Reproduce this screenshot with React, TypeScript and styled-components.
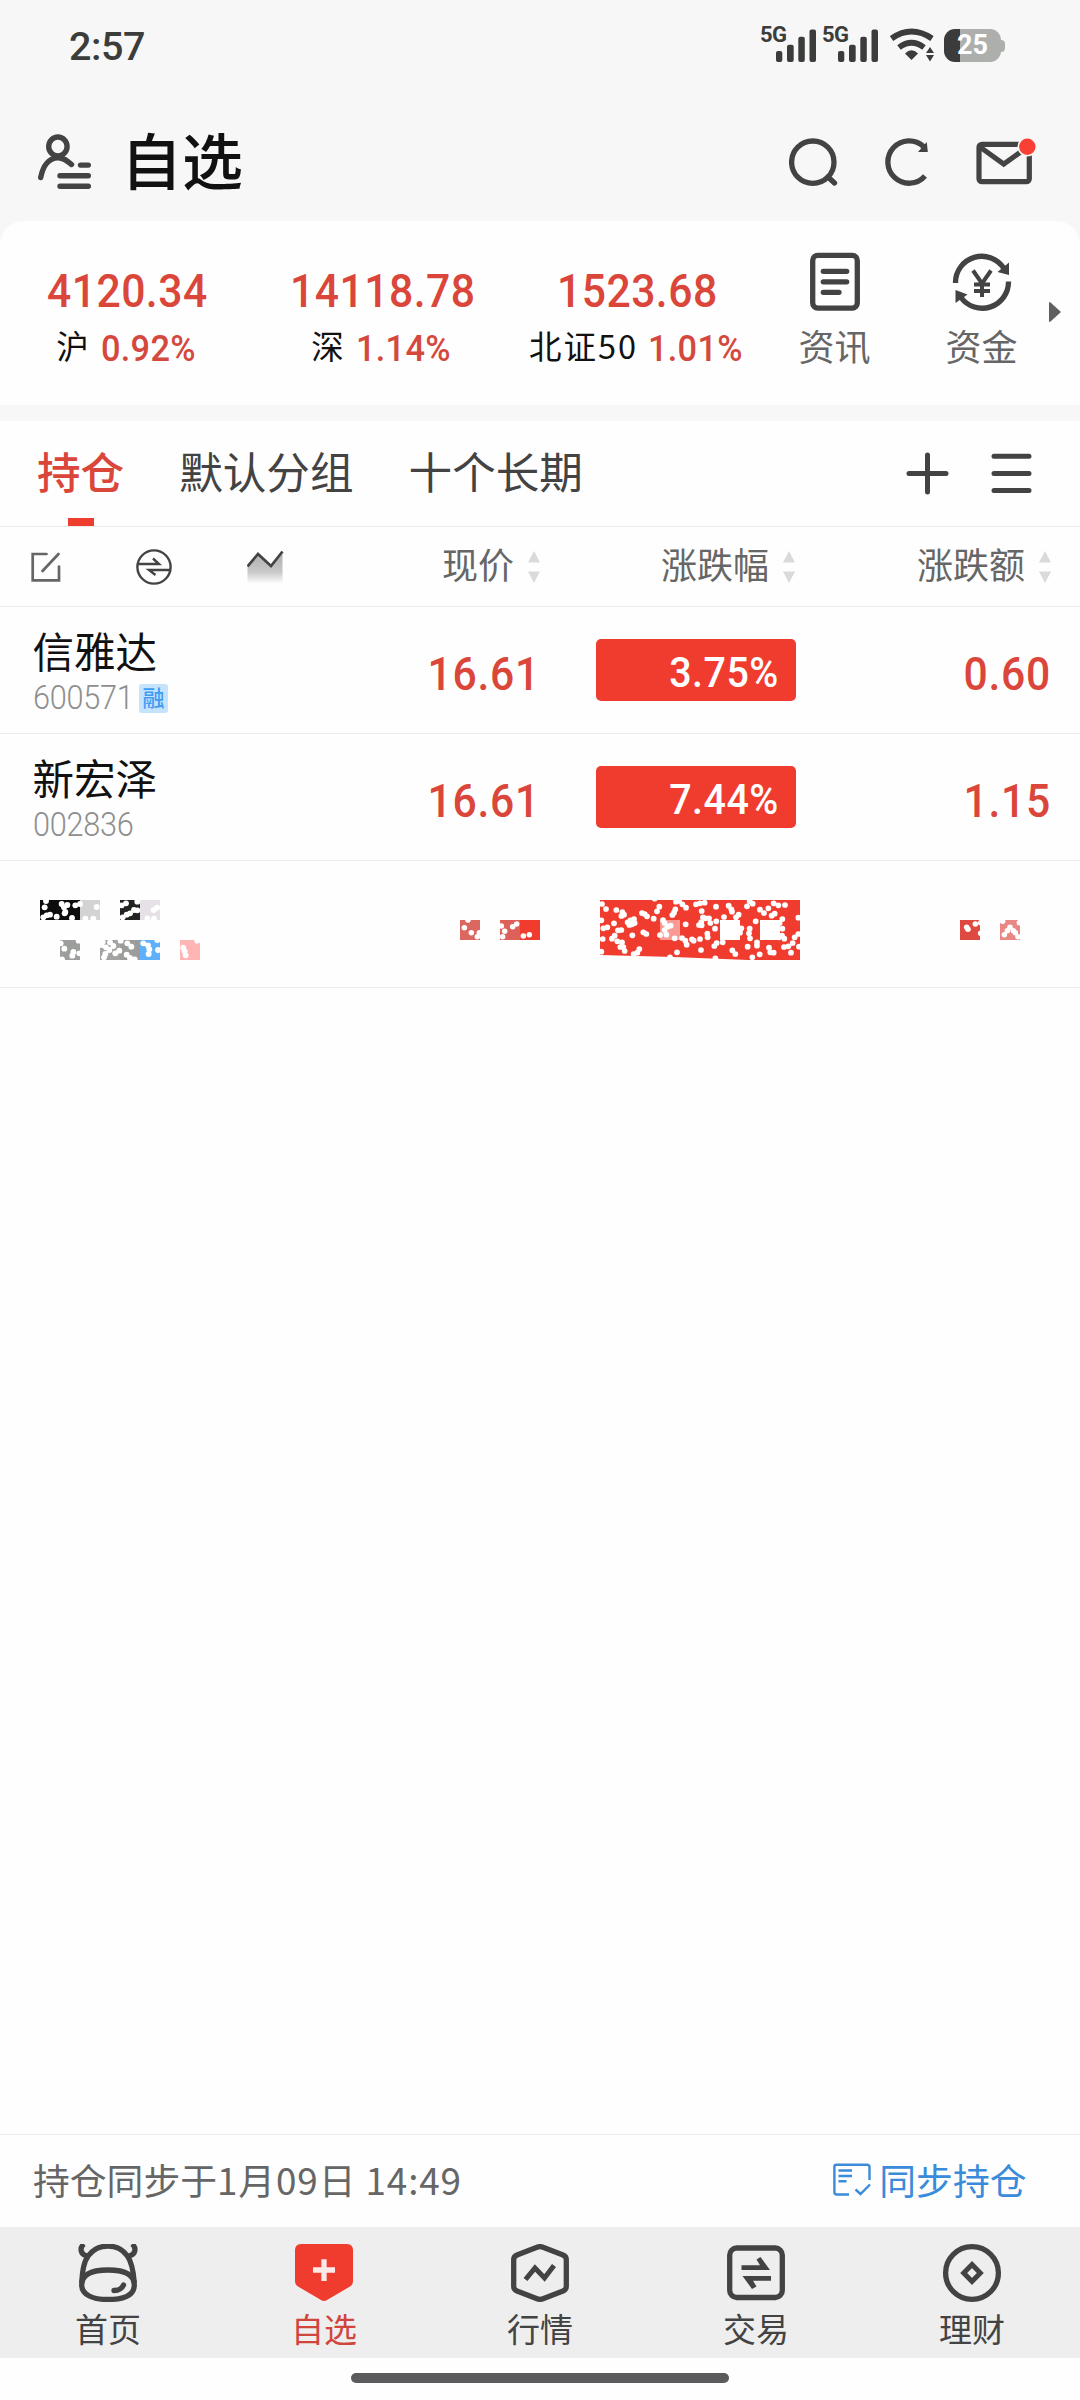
import React from "react";
import styled, { createGlobalStyle } from "styled-components";

const RED = "#db463a";
const INK = "#434343";

const GlobalStyle = createGlobalStyle`
  * { box-sizing: border-box; }
  body { margin: 0; background: #fefefe; }
  svg { display: block; flex: none; }
`;

const CJK = `"Noto Sans CJK SC", "Noto Sans", sans-serif`;
const NUM = `Roboto, "Noto Sans CJK SC", sans-serif`;

const Screen = styled.div`
  width: 1080px;
  height: 2400px;
  display: flex;
  flex-direction: column;
  background: #fefefe;
  font-family: ${CJK};
  white-space: nowrap;
  overflow: hidden;
`;

const Top = styled.div`
  background: #f7f7f7;
`;

const StatusBar = styled.div`
  height: 102px;
  display: flex;
  justify-content: space-between;
  align-items: flex-start;
  padding: 22px 75px 0 69px;
`;

const Clock = styled.span`
  font: 500 39.5px/49px ${NUM};
  letter-spacing: -0.4px;
  color: #3b3d3b;
`;

const StatusIcons = styled.div`
  display: flex;
  margin-top: 4px;
`;

const Signal = styled.div`
  width: 62px;
  display: flex;
  align-items: flex-start;
`;

const NetLabel = styled.span`
  width: 15px;
  margin: 1px 1px 0 -1px;
  font: 700 22px/15px ${NUM};
  color: #3b3d3b;
  letter-spacing: -0.6px;
`;

const Battery = styled.div`
  display: flex;
  align-items: center;
  margin: 3px 0 0 10px;
  height: 33px;
`;

const BatteryBody = styled.div`
  width: 57px;
  height: 33px;
  border-radius: 11px;
  background: linear-gradient(to right, #3b3b3b 16px, #adafad 16px);
  color: #fff;
  font: 700 27px/33px ${NUM};
  text-align: center;
`;

const BatteryTip = styled.div`
  width: 4px;
  height: 12px;
  border-radius: 0 4px 4px 0;
  background: #adafad;
`;

const Header = styled.header`
  height: 119px;
  display: flex;
  align-items: center;
  padding: 0 43px 0 38px;
`;

const Title = styled.h1`
  margin: 0 auto 6px 29px;
  font: 500 61px/80px ${CJK};
  color: #111;
`;

const HeaderActions = styled.div`
  display: flex;
  align-items: center;
`;

const Card = styled.section`
  height: 184px;
  display: flex;
  background: #fefefe;
  border-radius: 24px 24px 0 0;
`;

const Stat = styled.div`
  width: 255px;
  padding-top: 47px;
  display: flex;
  flex-direction: column;
  align-items: center;
`;

const StatValue = styled.span`
  font: 500 46.4px/46px ${NUM};
  letter-spacing: 0.5px;
  transform: scaleX(0.92);
  color: ${RED};
`;

const StatLine = styled.div`
  margin-top: 16px;
  height: 38px;
  display: flex;
  align-items: center;
  gap: 7px;
`;

const StatName = styled.span`
  font: 400 32.5px/32px ${CJK};
  letter-spacing: 2px;
  color: #111;
  margin-bottom: 8px;
`;

const StatPct = styled.span`
  font: 500 36.5px/36px ${NUM};
  letter-spacing: 0.3px;
  transform: scaleX(0.94);
  color: #d4483e;
`;

const Shortcut = styled.div`
  width: 147px;
  padding-top: 31px;
  display: flex;
  flex-direction: column;
  align-items: center;
`;

const ShortcutName = styled.span`
  margin-top: 13px;
  font: 400 36px/40px ${CJK};
  color: #666;
`;

const Shortcuts = styled.div`
  display: flex;
  margin-left: -4px;
`;

const MoreArrow = styled.svg`
  margin: 81px 0 0 -6px;
`;

const Spacer = styled.div`
  height: 16px;
  background: #f7f7f7;
`;

const TabBar = styled.nav`
  height: 106px;
  display: flex;
  padding: 19px 48px 0 37px;
  border-bottom: 1px solid #ececec;
`;

const Tabs = styled.div`
  display: flex;
  gap: 55px;
  margin-right: auto;
`;

const Tab = styled.div<{ $active?: boolean }>`
  display: flex;
  flex-direction: column;
  align-items: center;
  gap: 18px;
  font: ${(p) => (p.$active ? 500 : 400)} 43.6px/60px ${CJK};
  color: ${(p) => (p.$active ? RED : INK)};
`;

const Underline = styled.i`
  width: 26px;
  height: 8px;
  background: #ee3c2d;
`;

const TabActions = styled.div`
  display: flex;
  gap: 42px;
  padding-top: 12px;
`;

const TableHead = styled.div`
  height: 80px;
  display: grid;
  grid-template-columns: 302px 204px 255px 256px;
  align-items: center;
  padding-left: 34px;
  border-bottom: 1px solid #ececec;
`;

const HeadTools = styled.div`
  display: flex;
  align-items: center;
  margin-left: -3px;
  gap: 75px;
`;

const HeadCell = styled.div`
  display: flex;
  justify-content: flex-end;
  align-items: center;
  gap: 14px;
  font: 400 36px/44px ${CJK};
  color: #666;
`;

const HeadText = styled.span`
  margin-bottom: 8px;
`;

const Row = styled.div`
  height: 127px;
  display: grid;
  grid-template-columns: 301.5px 206px 257px 254px;
  padding-left: 32.5px;
  border-bottom: 1px solid #ececec;
`;

const Name = styled.div`
  font: 400 41.5px/50px ${CJK};
  color: #111;
  padding-top: 18px;
`;

const CodeLine = styled.div`
  display: flex;
  align-items: center;
  height: 30px;
  margin-top: 8px;
`;

const Code = styled.span`
  width: 98px;
  font: 300 33px/30px ${NUM};
  letter-spacing: -0.3px;
  transform: scaleX(0.93);
  transform-origin: left;
  color: #8e8e8e;
`;

const Tag = styled.span`
  width: 29px;
  height: 29px;
  margin-left: 8.5px;
  border-radius: 3px;
  background: #c5e3fb;
  color: #3f9cf5;
  font: 500 22px/25px ${CJK};
  text-align: center;
`;

const Price = styled.div`
  font: 500 46.4px/46px ${NUM};
  letter-spacing: 0.8px;
  color: ${RED};
  text-align: right;
  padding-top: 44px;
  transform: scaleX(0.92);
  transform-origin: right;
`;

const Change = styled.div`
  width: 200px;
  height: 62px;
  margin: 32px 0 0 56px;
  padding: 5px 17px 0 0;
  border-radius: 5px;
  background: #f03c2e;
  color: #fff;
  font: 500 42.4px/58px ${NUM};
  text-align: right;
`;

const ChangeText = styled.span`
  display: inline-block;
  letter-spacing: 0.5px;
  transform: scaleX(0.93);
  transform-origin: right;
`;

const MaskCell = styled.div<{ $left: number; $top: number }>`
  padding: ${(p) => p.$top}px 0 0 ${(p) => p.$left}px;
`;

const Blank = styled.div`
  flex: 1;
`;

const SyncBar = styled.div`
  height: 93px;
  display: flex;
  justify-content: space-between;
  align-items: center;
  padding: 0 53.5px 5px 33px;
  border-top: 1px solid #ececec;
  font: 400 36.8px/50px ${CJK};
  color: #666;
`;

const SyncDate = styled.span`
  letter-spacing: 0.9px;
`;

const SyncLink = styled.span`
  display: flex;
  align-items: center;
  gap: 8px;
  color: #3a8bd9;
`;

const BottomNav = styled.nav`
  height: 131px;
  display: grid;
  grid-template-columns: repeat(5, 1fr);
  background: #eeeeee;
  padding-top: 17px;
`;

const NavItem = styled.div<{ $active?: boolean }>`
  display: flex;
  flex-direction: column;
  align-items: center;
  gap: 8px;
  font: 400 33px/36px ${CJK};
  color: ${(p) => (p.$active ? "#d0453c" : INK)};
`;

const HomeArea = styled.div`
  height: 42px;
  display: flex;
  justify-content: center;
  padding-top: 15px;
`;

const HomeBar = styled.div`
  width: 378px;
  height: 10px;
  border-radius: 5px;
  background: #5b5b5d;
`;

const WifiGlyph = styled.svg`
  margin-left: 5px;
`;

const RefreshGlyph = styled.svg`
  margin-left: 47px;
`;

const MailGlyph = styled.svg`
  margin-left: 46px;
`;

const SyncGlyph = styled.svg`
  margin-top: 3px;
`;

const SignalMeter = () => (
  <Signal>
    <NetLabel>5G</NetLabel>
    <svg width="41" height="37" viewBox="0 0 41 37" fill="#3b3d3b">
      <rect x="0" y="25" width="6.3" height="11" rx="2" />
      <rect x="11" y="18.7" width="6.7" height="17.3" rx="2" />
      <rect x="22.3" y="10.7" width="6.5" height="25.3" rx="2" />
      <rect x="33.5" y="3.5" width="6.5" height="32.5" rx="2" />
    </svg>
  </Signal>
);

const Wifi = () => (
  <WifiGlyph width="44" height="36" viewBox="889 27 44 36" fill="#3b3d3b">
    <path d="M890.500 39.500Q910.500 25.500 931 39.500" fill="none" stroke="#3b3d3b" strokeWidth="5.8" />
    <path d="M898 48.500Q910.500 39 923 48.500" fill="none" stroke="#3b3d3b" strokeWidth="5.8" />
    <path d="M904 54.500Q910.500 48 917 54.500L910.500 61Z" />
    <path d="M929 48L933 54H925ZM929 62.500L933 56H925Z" />
  </WifiGlyph>
);

const UserIcon = () => (
  <svg width="54" height="56" viewBox="38 133.500 54 56" fill="none" stroke={INK} strokeWidth="5.4" strokeLinecap="round">
    <ellipse cx="57.900" cy="146" rx="9.200" ry="9.500" />
    <path d="M40.700 177C43 165 49 157.500 57.900 157.200C63.500 157 67 160 71.500 164" />
    <path d="M80.500 164.600H88.300M60 175.200H88.300M60 185.800H88.300" />
  </svg>
);

const SearchIcon = () => (
  <svg width="49" height="50" viewBox="789 136.500 49 50" fill="none" stroke={INK} strokeWidth="5.300">
    <circle cx="812.800" cy="161.700" r="21.200" />
    <path d="M828 176.500L834.500 182.500" strokeLinecap="round" />
  </svg>
);

const RefreshIcon = () => (
  <RefreshGlyph width="44" height="50" viewBox="885 136.500 44 50" fill="none" stroke={INK} strokeWidth="5.300">
    <path d="M923.500 146A21.200 21.200 0 1 0 925 175.500" />
    <path d="M926.800 141.500L927.800 151.500H918Z" fill={INK} stroke="none" />
  </RefreshGlyph>
);

const MailIcon = () => (
  <MailGlyph width="62" height="50" viewBox="975 136.500 62 50" fill="none" stroke={INK} strokeWidth="5.200">
    <rect x="979" y="143.800" width="50.300" height="37.400" rx="3" />
    <path d="M980 146.500L1003.700 163.500L1027 147" />
    <circle cx="1027.300" cy="146.300" r="9" fill="#fa4034" stroke="#f7f7f7" strokeWidth="1.600" />
  </MailGlyph>
);

const NewsIcon = () => (
  <svg width="60" height="60" viewBox="0 0 60 60" fill="none" stroke={INK} strokeWidth="5.300">
    <rect x="7.700" y="3.400" width="44.600" height="52.700" rx="5" />
    <path d="M18.300 19.300H41.700M18.300 29.800H41.700M18.300 40.300H34" strokeLinecap="round" />
  </svg>
);

const FundsIcon = () => (
  <svg width="60" height="60" viewBox="952 252 60 60" fill="none" stroke={INK} strokeWidth="5.300">
    <path d="M955.500 283A26.300 26.300 0 0 1 1004 268.500" />
    <path d="M1008.500 281.500A26.300 26.300 0 0 1 961 297.500" />
    <path d="M1009 262.500V275L997.500 272Z" fill={INK} stroke="none" />
    <path d="M955.500 290V303L967.500 294.500Z" fill={INK} stroke="none" />
    <path d="M973 270.500L982 283.500L991 270.500M982 283V297M974 284.500H990M974 291H990" strokeWidth="4" />
  </svg>
);

const PlusIcon = () => (
  <svg width="43" height="43" viewBox="0 0 43 43" stroke={INK} strokeWidth="5" strokeLinecap="round">
    <path d="M3 21.500H40M21.500 3V40" />
  </svg>
);

const MenuIcon = () => (
  <svg width="41" height="43" viewBox="0 0 41 43" stroke={INK} strokeWidth="5" strokeLinecap="round">
    <path d="M3 4.300H38M3 21.500H38M3 38.500H38" />
  </svg>
);

const EditIcon = () => (
  <svg width="30" height="32" viewBox="31 551 30 32" fill="none" stroke="#666" strokeWidth="2.700" strokeLinecap="round">
    <path d="M46.500 554H32.700V580.300H59V566.500" />
    <path d="M58.500 554L42.500 571" />
  </svg>
);

const SwapIcon = () => (
  <svg width="36" height="36" viewBox="136.500 548.500 36 36" fill="none" stroke={INK} strokeWidth="2.400">
    <circle cx="154.500" cy="566.500" r="16.600" />
    <path d="M138.500 563.500H159.500L153.500 558M170.500 569.500H149.500L156 574.500" />
  </svg>
);

const TrendIcon = () => (
  <svg width="37" height="34" viewBox="247 549.500 37 34" fill="none">
    <defs>
      <linearGradient id="fade" x1="0" y1="0" x2="0" y2="1">
        <stop offset="0.300" stopColor="#b8b8b8" />
        <stop offset="0.650" stopColor="#cacaca" />
        <stop offset="1" stopColor="#fdfdfd" />
      </linearGradient>
    </defs>
    <path d="M247.500 566L258 553.500L271 565.500L282.500 551V583H247.500Z" fill="url(#fade)" />
    <path d="M247.500 566L258 553.500L271 565.500L282.500 551" stroke={INK} strokeWidth="2.700" />
  </svg>
);

const SortArrows = () => (
  <svg width="12" height="32" viewBox="0 0 12 32" fill="#dcd9dd">
    <path d="M6 0L12 11.500H0ZM6 32L12 20.500H0Z" />
  </svg>
);

const SyncIcon = () => (
  <SyncGlyph width="38" height="34" viewBox="833.500 2163 38 34" fill="none" stroke="#3a8bd9" strokeWidth="2.400">
    <path d="M849.500 2194.500H837Q834.900 2194.500 834.900 2192V2166.500Q834.900 2164.700 837 2164.700H867.500Q870 2164.700 870 2167V2180" />
    <path d="M839 2170.500H852.500M839 2176H852.500M839 2181.300H847" />
    <path d="M856 2189.500L861 2194L870.500 2184.500" />
  </SyncGlyph>
);

const HomeIcon = () => (
  <svg width="60" height="58" viewBox="78 2244 60 58" fill="none" stroke={INK} strokeWidth="5.300">
    <path d="M81.700 2283C82.500 2271 83.500 2262 88.500 2255.500C98 2243 118 2243 127 2255.500C132 2262 133.500 2271 134.300 2283" />
    <path d="M81.700 2285C81.700 2274 93 2270 108 2270S134.300 2274 134.300 2285S123 2299.500 108 2299.500S81.700 2295 81.700 2285Z" />
    <path d="M87 2256C80 2254.500 79.500 2247.500 84 2244M129 2256C136 2254.500 136.500 2247.500 132 2244" />
    <path d="M114 2290.500C119.500 2290.500 122 2288.500 123.500 2285" strokeLinecap="round" />
  </svg>
);

const WatchIcon = () => (
  <svg width="60" height="58" viewBox="0 0 60 58">
    <path d="M7 0H53Q59 0.500 59 6V37Q59 40.500 56 42.500L33 56Q30 58 27 56L4 42.500Q1 40.500 1 37V6Q1 0.500 7 0Z" fill="#f03c2e" />
    <path d="M19 26H41M30 15.300V37" stroke="#fbe9e8" strokeWidth="5.300" />
  </svg>
);

const MarketIcon = () => (
  <svg width="60" height="58" viewBox="0 0 60 58" fill="none" stroke={INK} strokeWidth="5.300" strokeLinejoin="round">
    <path d="M27 3.300Q30 2 33 3.300L53 11Q56.300 12.500 56.300 15.500V42.500Q56.300 45.500 53 47L33 54.700Q30 56 27 54.700L7 47Q3.700 45.500 3.700 42.500V15.500Q3.700 12.500 7 11Z" />
    <path d="M15.500 35.500L25 24L34.500 34L44 21.500" strokeLinejoin="miter" strokeWidth="5" />
  </svg>
);

const TradeIcon = () => (
  <svg width="60" height="58" viewBox="0 0 60 58" fill="none" stroke={INK} strokeWidth="5.300">
    <rect x="3.700" y="4" width="52.600" height="49.500" rx="7" />
    <path d="M15.500 21.300H34L30.500 15.500L34.500 13L44 26H15.500ZM45 36.700H27L30.500 42.500L26 45L16.500 32H45Z" fill={INK} stroke="none" />
  </svg>
);

const WealthIcon = () => (
  <svg width="60" height="58" viewBox="0 0 60 58" fill="none" stroke={INK}>
    <ellipse cx="30" cy="29" rx="26.400" ry="26.300" strokeWidth="5.300" />
    <path d="M30 20.500L38.300 29L30 37.500L21.700 29Z" strokeWidth="5" />
  </svg>
);

type Dot = [number, number];
type Tile = [number, number, string];

/* Redaction mosaics: 60-unit tiles, scaled to 20px, speckled with round holes. */
const changeDots: Dot[] = [
  [36, 42], [48, 57], [79, 60], [97, 66], [102, 74], [94, 78], [72, 100], [34, 91], [40, 115], [52, 112], [84, 121], [94, 120],
  [113, 97], [121, 91], [132, 87], [118, 105], [126, 103], [134, 99], [127, 136], [156, 69], [164, 72], [171, 79], [191, 86],
  [160, 127], [169, 132], [66, 146], [74, 137], [82, 154], [38, 147], [96, 157], [91, 171], [100, 171], [104, 183], [34, 185],
  [148, 177], [142, 188], [131, 192], [194, 26], [208, 50], [201, 64], [219, 90], [224, 99], [232, 110], [242, 107], [224, 120],
  [229, 134], [210, 135], [252, 68], [256, 58], [247, 75], [258, 35], [267, 33], [277, 43], [288, 53], [287, 103], [254, 145],
  [276, 144], [286, 152], [290, 164], [306, 148], [311, 152], [330, 147], [333, 180], [261, 187], [318, 43], [330, 40],
  [344, 38], [335, 63], [339, 82], [346, 85], [357, 85], [334, 96], [327, 105], [335, 106], [361, 99], [378, 50], [379, 94],
  [375, 116], [352, 131], [353, 142], [373, 168], [380, 159], [398, 157], [416, 47], [424, 58], [426, 65], [446, 74], [438, 82],
  [402, 81], [454, 115], [450, 128], [427, 181], [436, 192], [471, 49], [488, 41], [479, 34], [497, 94], [479, 116], [477, 130],
  [480, 145], [473, 170], [501, 157], [501, 167], [509, 193], [487, 202], [510, 59], [522, 69], [535, 55], [551, 40],
  [565, 46], [585, 45], [554, 71], [545, 77], [577, 87], [569, 99], [577, 116], [576, 137], [583, 146], [567, 142], [537, 173],
  [541, 187], [551, 188], [582, 171], [595, 169], [603, 188], [608, 159], [614, 142], [625, 132], [627, 170], [625, 83],
  [240, 202], [376, 205],
];

const nameTiles: Tile[] = [
  [30, 30, "#0d0d0d"], [90, 30, "#0d0d0d"], [150, 30, "#d3d3d3"], [270, 30, "#222"], [330, 30, "#e5e1e6"],
  [90, 150, "#9c9e9c"], [210, 150, "#a3a3a2"], [270, 150, "#9c9c9b"], [330, 150, "#5fb0fa"], [450, 150, "#feb5b3"],
];

const nameDots: Dot[] = [
  [44, 52], [48, 33], [40, 82], [50, 76], [60, 74], [80, 80], [95, 42], [102, 52], [106, 66], [112, 45], [126, 84], [104, 70],
  [136, 46], [150, 42], [200, 51], [166, 86], [190, 86], [275, 46], [288, 40], [278, 82], [290, 74], [300, 70], [312, 60],
  [322, 61], [322, 35], [371, 60], [381, 53], [352, 85], [372, 86], [103, 176], [130, 186], [127, 197], [146, 152], [96, 208],
  [148, 190], [92, 160], [215, 165], [228, 172], [218, 155], [240, 157], [250, 168], [268, 182], [256, 190], [226, 192],
  [238, 180], [222, 202], [292, 160], [304, 170], [290, 194], [300, 204], [340, 160], [354, 166], [358, 178], [356, 192],
  [382, 150], [384, 180], [460, 173], [464, 184], [467, 196], [502, 152], [272, 152], [314, 208],
];

const Mosaic = ({ tiles, dots, view, w, h, r = 8.3 }: { tiles: Tile[]; dots: Dot[]; view: string; w: number; h: number; r?: number }) => (
  <svg width={w} height={h} viewBox={view}>
    {tiles.map(([x, y, c]) => (
      <rect key={`${x}-${y}`} x={x} y={y} width="60" height="60" fill={c} />
    ))}
    {dots.map(([x, y]) => (
      <circle key={`${x}-${y}`} cx={x} cy={y} r={r} fill="#fff" />
    ))}
  </svg>
);

const indices = [
  { name: "沪", value: "4120.34", pct: "0.92%" },
  { name: "深", value: "14118.78", pct: "1.14%" },
  { name: "北证50", value: "1523.68", pct: "1.01%" },
];

const stocks = [
  { name: "信雅达", code: "600571", tag: "融", price: "16.61", change: "3.75%", diff: "0.60" },
  { name: "新宏泽", code: "002836", tag: "", price: "16.61", change: "7.44%", diff: "1.15" },
];

const navItems = [
  { label: "首页", icon: <HomeIcon /> },
  { label: "自选", icon: <WatchIcon />, active: true },
  { label: "行情", icon: <MarketIcon /> },
  { label: "交易", icon: <TradeIcon /> },
  { label: "理财", icon: <WealthIcon /> },
];

export default function App() {
  return (
    <Screen>
      <GlobalStyle />
      <Top>
        <StatusBar>
          <Clock>2:57</Clock>
          <StatusIcons>
            <SignalMeter />
            <SignalMeter />
            <Wifi />
            <Battery>
              <BatteryBody>25</BatteryBody>
              <BatteryTip />
            </Battery>
          </StatusIcons>
        </StatusBar>
        <Header>
          <UserIcon />
          <Title>自选</Title>
          <HeaderActions>
            <SearchIcon />
            <RefreshIcon />
            <MailIcon />
          </HeaderActions>
        </Header>
        <Card>
          {indices.map((i) => (
            <Stat key={i.name}>
              <StatValue>{i.value}</StatValue>
              <StatLine>
                <StatName>{i.name}</StatName>
                <StatPct>{i.pct}</StatPct>
              </StatLine>
            </Stat>
          ))}
          <Shortcuts>
            <Shortcut>
              <NewsIcon />
              <ShortcutName>资讯</ShortcutName>
            </Shortcut>
            <Shortcut>
              <FundsIcon />
              <ShortcutName>资金</ShortcutName>
            </Shortcut>
          </Shortcuts>
          <MoreArrow width="12" height="20" viewBox="0 0 12 20">
            <path d="M0 1Q0 -0.500 1.500 0.500L12 10L1.500 19.500Q0 20.500 0 19Z" fill="#606062" />
          </MoreArrow>
        </Card>
      </Top>
      <Spacer />
      <TabBar>
        <Tabs>
          <Tab $active>
            持仓
            <Underline />
          </Tab>
          <Tab>默认分组</Tab>
          <Tab>十个长期</Tab>
        </Tabs>
        <TabActions>
          <PlusIcon />
          <MenuIcon />
        </TabActions>
      </TabBar>
      <TableHead>
        <HeadTools>
          <EditIcon />
          <SwapIcon />
          <TrendIcon />
        </HeadTools>
        {["现价", "涨跌幅", "涨跌额"].map((t) => (
          <HeadCell key={t}>
            <HeadText>{t}</HeadText>
            <SortArrows />
          </HeadCell>
        ))}
      </TableHead>
      {stocks.map((s) => (
        <Row key={s.code}>
          <div>
            <Name>{s.name}</Name>
            <CodeLine>
              <Code>{s.code}</Code>
              {s.tag && <Tag>{s.tag}</Tag>}
            </CodeLine>
          </div>
          <Price>{s.price}</Price>
          <Change>
            <ChangeText>{s.change}</ChangeText>
          </Change>
          <Price>{s.diff}</Price>
        </Row>
      ))}
      <Row>
        <MaskCell $left={7.5} $top={39}>
          <Mosaic tiles={nameTiles} dots={nameDots} view="30 30 480 180" w={160} h={60} r={8.8} />
        </MaskCell>
        <MaskCell $left={126} $top={59}>
          <Mosaic
            tiles={[[0, 0, "#dc6660"], [120, 0, "#de6159"], [180, 0, "#f03c2e"]]}
            dots={[[13, 23], [34, 38], [24, 0], [52, 50], [58, 38], [124, 18], [134, 34], [128, 50], [158, 20], [170, 12], [190, 48], [208, 44]]}
            view="0 0 240 60"
            w={80}
            h={20}
          />
        </MaskCell>
        <MaskCell $left={60} $top={39}>
          <svg width="200" height="60" viewBox="30 30 600 180">
            <path d="M30 30H630V210H475L250 201L30 195Z" fill="#f03c2e" />
            <rect x="210" y="90" width="60" height="60" fill="#f99a95" />
            <path d="M390 90H450V150H390ZM510 90H570V150H510Z" fill="#fff" />
            {changeDots.map(([x, y]) => (
              <circle key={`${x}-${y}`} cx={x} cy={y} r="8.600" fill="#fff" />
            ))}
          </svg>
        </MaskCell>
        <MaskCell $left={163} $top={59}>
          <Mosaic
            tiles={[[0, 0, "#de4a41"], [120, 0, "#e88783"]]}
            dots={[[20, 22], [24, 28], [46, 12], [62, 40], [62, 8], [150, 22], [142, 32], [133, 44], [166, 38], [174, 50], [128, 4], [178, 8], [160, 32]]}
            view="0 0 180 60"
            w={60}
            h={20}
          />
        </MaskCell>
      </Row>
      <Blank />
      <SyncBar>
        <span>
          持仓同步于<SyncDate>1月09日 14:49</SyncDate>
        </span>
        <SyncLink>
          <SyncIcon />
          同步持仓
        </SyncLink>
      </SyncBar>
      <BottomNav>
        {navItems.map((n) => (
          <NavItem key={n.label} $active={n.active}>
            {n.icon}
            {n.label}
          </NavItem>
        ))}
      </BottomNav>
      <HomeArea>
        <HomeBar />
      </HomeArea>
    </Screen>
  );
}
